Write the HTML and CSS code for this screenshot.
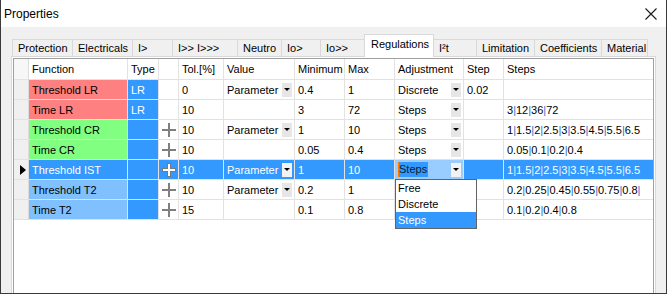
FILE: index.html
```html
<!DOCTYPE html>
<html lang="en">
<head>
    <meta charset="UTF-8">
    <title>Properties</title>
    <link rel="stylesheet" href="styles.css">
</head>
<body>
    <div class="window">
        <div class="titlebar">
            <span class="title">Properties</span>
            <svg class="close" width="12" height="12" viewBox="0 0 12 12"><path d="M0.5 0.5L11.5 11.5M11.5 0.5L0.5 11.5" stroke="#1a1a1a" stroke-width="1.1"/></svg>
        </div>
        <div class="tabs">
            <div class="tab">Protection</div>
            <div class="tab">Electricals</div>
            <div class="tab">I&gt;</div>
            <div class="tab">I&gt;&gt; I&gt;&gt;&gt;</div>
            <div class="tab">Neutro</div>
            <div class="tab">Io&gt;</div>
            <div class="tab">Io&gt;&gt;</div>
            <div class="tab active">Regulations</div>
            <div class="tab">I²t</div>
            <div class="tab">Limitation</div>
            <div class="tab">Coefficients</div>
            <div class="tab">Material</div>
        </div>
        <div class="page">
            <div class="grid">
                <div class="row head">
                    <div class="cell rh"></div>
                    <div class="cell">Function</div>
                    <div class="cell">Type</div>
                    <div class="cell"></div>
                    <div class="cell">Tol.[%]</div>
                    <div class="cell">Value</div>
                    <div class="cell">Minimum</div>
                    <div class="cell">Max</div>
                    <div class="cell">Adjustment</div>
                    <div class="cell">Step</div>
                    <div class="cell">Steps</div>
                </div>
                <!-- Threshold LR -->
                <div class="row">
                    <div class="cell rh"></div>
                    <div class="cell red">Threshold LR</div>
                    <div class="cell blue">LR</div>
                    <div class="cell"></div>
                    <div class="cell">0</div>
                    <div class="cell"><span>Parameter</span><span class="dd"></span></div>
                    <div class="cell">0.4</div>
                    <div class="cell">1</div>
                    <div class="cell"><span>Discrete</span><span class="dd"></span></div>
                    <div class="cell">0.02</div>
                    <div class="cell"></div>
                </div>
                <!-- Time LR -->
                <div class="row">
                    <div class="cell rh"></div>
                    <div class="cell red">Time LR</div>
                    <div class="cell blue">LR</div>
                    <div class="cell"></div>
                    <div class="cell">10</div>
                    <div class="cell"></div>
                    <div class="cell">3</div>
                    <div class="cell">72</div>
                    <div class="cell"><span>Steps</span><span class="dd"></span></div>
                    <div class="cell"></div>
                    <div class="cell"><span>3<i>|</i>12<i>|</i>36<i>|</i>72</span></div>
                </div>
                <!-- Threshold CR -->
                <div class="row">
                    <div class="cell rh"></div>
                    <div class="cell green">Threshold CR</div>
                    <div class="cell blue"></div>
                    <div class="cell plus"><svg width="14" height="14" viewBox="0 0 14 14"><path d="M7 0V14M0 7H14" stroke="#808080" stroke-width="2"/></svg></div>
                    <div class="cell">10</div>
                    <div class="cell"><span>Parameter</span><span class="dd"></span></div>
                    <div class="cell">1</div>
                    <div class="cell">10</div>
                    <div class="cell"><span>Steps</span><span class="dd"></span></div>
                    <div class="cell"></div>
                    <div class="cell"><span>1<i>|</i>1.5<i>|</i>2<i>|</i>2.5<i>|</i>3<i>|</i>3.5<i>|</i>4.5<i>|</i>5.5<i>|</i>6.5</span></div>
                </div>
                <!-- Time CR -->
                <div class="row">
                    <div class="cell rh"></div>
                    <div class="cell green">Time CR</div>
                    <div class="cell blue"></div>
                    <div class="cell plus"><svg width="14" height="14" viewBox="0 0 14 14"><path d="M7 0V14M0 7H14" stroke="#808080" stroke-width="2"/></svg></div>
                    <div class="cell">10</div>
                    <div class="cell"></div>
                    <div class="cell">0.05</div>
                    <div class="cell">0.4</div>
                    <div class="cell"><span>Steps</span><span class="dd"></span></div>
                    <div class="cell"></div>
                    <div class="cell"><span>0.05<i>|</i>0.1<i>|</i>0.2<i>|</i>0.4</span></div>
                </div>
                <!-- Threshold IST (selected) -->
                <div class="row sel">
                    <div class="cell rh"><svg class="marker" width="7" height="10" viewBox="0 0 7 10"><path d="M0 0L6 5L0 10Z" fill="#000"/></svg></div>
                    <div class="cell">Threshold IST</div>
                    <div class="cell"></div>
                    <div class="cell plus"><svg width="16" height="16" viewBox="0 0 16 16"><path d="M8 1V15M1 8H15" stroke="#7a7a7a" stroke-width="4"/><path d="M8 2V14M2 8H14" stroke="#fff" stroke-width="2"/></svg></div>
                    <div class="cell">10</div>
                    <div class="cell"><span>Parameter</span><span class="dd"></span></div>
                    <div class="cell">1</div>
                    <div class="cell">10</div>
                    <div class="cell edit"><span class="hl">Steps</span><span class="dd"></span></div>
                    <div class="cell"></div>
                    <div class="cell"><span>1<i>|</i>1.5<i>|</i>2<i>|</i>2.5<i>|</i>3<i>|</i>3.5<i>|</i>4.5<i>|</i>5.5<i>|</i>6.5</span></div>
                </div>
                <!-- Threshold T2 -->
                <div class="row">
                    <div class="cell rh"></div>
                    <div class="cell lblue">Threshold T2</div>
                    <div class="cell blue"></div>
                    <div class="cell plus"><svg width="14" height="14" viewBox="0 0 14 14"><path d="M7 0V14M0 7H14" stroke="#808080" stroke-width="2"/></svg></div>
                    <div class="cell">10</div>
                    <div class="cell"><span>Parameter</span><span class="dd"></span></div>
                    <div class="cell">0.2</div>
                    <div class="cell">1</div>
                    <div class="cell"></div>
                    <div class="cell"></div>
                    <div class="cell"><span>0.2<i>|</i>0.25<i>|</i>0.45<i>|</i>0.55<i>|</i>0.75<i>|</i>0.8<i>|</i></span></div>
                </div>
                <!-- Time T2 -->
                <div class="row">
                    <div class="cell rh"></div>
                    <div class="cell lblue">Time T2</div>
                    <div class="cell blue"></div>
                    <div class="cell plus"><svg width="14" height="14" viewBox="0 0 14 14"><path d="M7 0V14M0 7H14" stroke="#808080" stroke-width="2"/></svg></div>
                    <div class="cell">15</div>
                    <div class="cell"></div>
                    <div class="cell">0.1</div>
                    <div class="cell">0.8</div>
                    <div class="cell"></div>
                    <div class="cell"></div>
                    <div class="cell"><span>0.1<i>|</i>0.2<i>|</i>0.4<i>|</i>0.8</span></div>
                </div>
                <!-- open Adjustment list -->
                <div class="popup">
                    <div class="item">Free</div>
                    <div class="item">Discrete</div>
                    <div class="item on">Steps</div>
                </div>
            </div>
        </div>
    </div>
</body>
</html>
```

FILE: styles.css
```css
* {
    box-sizing: border-box;
}
body {
    margin: 0;
    font-family: "Liberation Sans", Arial, sans-serif;
    font-size: 11px;
    color: #000;
    background: #f0f0f0;
}
.window {
    width: 667px;
    height: 294px;
    background: #f0f0f0;
    border: 1px solid #3a3a3a;
    border-top: none;
    overflow: hidden;
}
.titlebar {
    height: 27px;
    background: #fff;
    display: flex;
    align-items: center;
    justify-content: space-between;
    padding: 0 9px 0 3px;
}
.titlebar .title {
    font-size: 12px;
}

/* tabs */
.tabs {
    display: grid;
    grid-template-columns: 60px 60px 40px 65px 44px 39px 44px 70px 42px 58px 67px 47px;
    align-items: end;
    height: 29px;
    padding-left: 11px;
}
.tab {
    height: 17px;
    line-height: 16px;
    padding-left: 5px;
    background: #f0f0f0;
    border: 1px solid #d9d9d9;
    border-right: none;
    border-bottom: none;
    white-space: nowrap;
}
.tab:last-child {
    border-right: 1px solid #d9d9d9;
}
.tab.active {
    height: 23px;
    line-height: 19px;
    padding-left: 6px;
    background: #fff;
    border-right: 1px solid #d9d9d9;
    margin-bottom: -1px;
    position: relative;
    z-index: 1;
}
.tab.active + .tab {
    border-left: none;
}

/* tab page and grid */
.page {
    margin-left: 10px;
    width: 645px;
    height: 240px;
    background: #fff;
    border: 1px solid #d9d9d9;
    padding: 1px;
}
.grid {
    position: relative;
    height: 100%;
    border: 1px solid #a0a0a0;
    border-bottom: none;
}
.row {
    display: grid;
    grid-template-columns: 15px 99px 31px 20px 45px 71px 50px 50px 69px 40px 149px;
    height: 20px;
}
.row.head {
    height: 21px;
}
.cell {
    display: flex;
    align-items: center;
    padding-left: 3px;
    border-right: 1px solid #e2e2e2;
    border-bottom: 1px solid #e2e2e2;
    white-space: nowrap;
    overflow: hidden;
}
.cell:last-child {
    border-right: none;
}
.cell.rh {
    background: #f0f0f0;
    border-right-color: #dcdcdc;
}
.head .cell.rh {
    background: #f7f7f7;
}
.cell i {
    font-style: normal;
    color: #2f72c8;
}
.cell.red {
    background: #ff8080;
}
.cell.green {
    background: #80ff80;
}
.cell.lblue {
    background: #80c0ff;
}
.cell.blue {
    background: #3399ff;
    color: #fff;
}
.cell.plus {
    justify-content: center;
    padding-left: 0;
}
.dd {
    width: 10px;
    height: 14px;
    margin-left: auto;
    margin-right: 2px;
    background: #e6e6e6;
    display: flex;
    align-items: center;
    justify-content: center;
    flex-shrink: 0;
}
.dd::after {
    content: "";
    border-top: 3px solid #000;
    border-left: 3px solid transparent;
    border-right: 3px solid transparent;
}

/* selected row */
.row.sel .cell {
    background: #3399ff;
    color: #fff;
}
.row.sel .cell.rh {
    background: #f0f0f0;
}
.row.sel .cell i {
    color: #d8ecff;
}
.row.sel .dd {
    background: #f2f2f2;
}
.row.sel .cell.edit {
    background: #99ccff;
    color: #000;
}
.marker {
    margin-left: 3px;
}
.hl {
    background: #3399ff;
    color: #0a1a33;
    border-left: 1px solid #ff7a00;
    line-height: 15px;
    padding-right: 1px;
}

/* dropdown list */
.popup {
    position: absolute;
    top: 120px;
    left: 381px;
    width: 82px;
    background: #fff;
    border: 1px solid #646464;
}
.popup .item {
    height: 16px;
    line-height: 16px;
    padding-left: 2px;
}
.popup .item.on {
    background: #3399ff;
    color: #fff;
}
```
